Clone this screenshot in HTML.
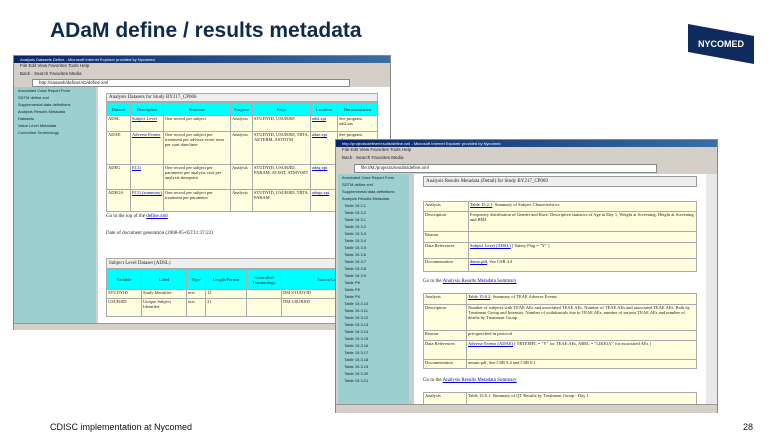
<!DOCTYPE html><html><head><style>
*{margin:0;padding:0;box-sizing:border-box}
body{width:780px;height:439px;background:#fff;position:relative;overflow:hidden;font-family:"Liberation Serif",serif;font-size:5px;color:#222}
.a{position:absolute}
.win{position:absolute;background:#d4d0c8;border:1px solid #888}
.tb{position:absolute;left:0;right:0;height:7px;background:linear-gradient(90deg,#0a246a,#3a6ea5);color:#fff;font-size:4px;font-family:"Liberation Sans",sans-serif;line-height:7px;padding-left:6px;white-space:nowrap;overflow:hidden}
.bar{position:absolute;left:0;right:0;font-size:4.5px;font-family:"Liberation Sans",sans-serif;padding-left:6px;white-space:nowrap;overflow:hidden;color:#222}
.side{position:absolute;background:#9ccfcf}
.cont{position:absolute;background:#fff;overflow:hidden}
table{border-collapse:collapse;position:absolute}
td{border:1px solid #aaa;background:#ffffe0;padding:0 1px;vertical-align:top;font-size:4.5px;line-height:5px;overflow:hidden}
th{border:1px solid #aaa;background:#00ffff;font-weight:normal;font-size:4.5px;padding:0 1px}
.l{color:#00c;text-decoration:underline}
.si{font-size:4px;color:#0a2030;line-height:7px;padding-left:4px;white-space:nowrap;font-family:"Liberation Sans",sans-serif}
</style></head><body>
<div class="a" style="left:50px;top:19px;font:bold 21px 'Liberation Sans',sans-serif;color:#0f2a4a">ADaM define / results metadata</div>
<svg class="a" style="left:686px;top:22px" width="70" height="44"><polygon points="2,2 68,14 68,42 2,30" fill="#0f2a5c"/><text x="35" y="25" fill="#fff" font-family="Liberation Sans" font-weight="bold" font-size="9" text-anchor="middle">NYCOMED</text></svg>

<div class="win" style="left:13px;top:55px;width:378px;height:275px">
<div class="tb" style="top:0">Analysis Datasets Define - Microsoft Internet Explorer provided by Nycomed</div>
<div class="bar" style="top:7px">File Edit View Favorites Tools Help</div>
<div class="bar" style="top:15px">Back · Search Favorites Media</div>
<div class="bar" style="top:23px;height:8px;background:#fff;left:18px;right:40px;border:1px solid #888">http://sasweb/define/AD/define.xml</div>
<div class="side" style="left:0;top:31px;width:82px;height:236px">
<div class="si">Annotated Case Report Form</div><div class="si">SDTM define.xml</div><div class="si">Supplemental data definitions</div><div class="si">Analysis Results Metadata</div><div class="si">Datasets</div><div class="si">Value Level Metadata</div><div class="si">Controlled Terminology</div></div>
<div class="cont" style="left:84px;top:31px;width:292px;height:236px">
<div class="a" style="left:8px;top:6px;width:272px;height:9px;background:#eee;border:1px solid #aaa;padding-left:2px;line-height:8px">Analysis Datasets for Study BY217_CP006</div>
<table style="left:8px;top:15px;width:272px">
<tr style="height:13px"><th style="width:24px">Dataset</th><th style="width:33px">Description</th><th style="width:67px">Structure</th><th style="width:22px">Purpose</th><th style="width:58px">Keys</th><th style="width:27px">Location</th><th>Documentation</th></tr>
<tr style="height:16px"><td>ADSL</td><td class="l">Subject Level</td><td>One record per subject</td><td>Analysis</td><td>STUDYID, USUBJID</td><td class="l">adsl.xpt</td><td>See program adsl.sas</td></tr>
<tr style="height:33px"><td>ADAE</td><td class="l">Adverse Events</td><td>One record per subject per treatment per adverse event term per start date/time</td><td>Analysis</td><td>STUDYID, USUBJID, TRTA, AETERM, ASTDTM</td><td class="l">adae.xpt</td><td>See program adae.sas</td></tr>
<tr style="height:25px"><td>ADEG</td><td class="l">ECG</td><td>One record per subject per parameter per analysis visit per analysis timepoint</td><td>Analysis</td><td>STUDYID, USUBJID, PARAM, AVISIT, ATMVISIT</td><td class="l">adeg.xpt</td><td></td></tr>
<tr style="height:22px"><td>ADEGS</td><td class="l">ECG (summary)</td><td>One record per subject per treatment per parameter</td><td>Analysis</td><td>STUDYID, USUBJID, TRTA, PARAM</td><td class="l">adegs.xpt</td><td></td></tr>
</table>
<div class="a" style="left:8px;top:127px">Go to the top of the <span class="l">define.xml</span></div>
<div class="a" style="left:8px;top:144px">Date of document generation (2008-05-05T11:37:22)</div>
<div class="a" style="left:8px;top:171px;width:300px;height:11px;background:#eee;border:1px solid #aaa;padding-left:2px;line-height:10px">Subject Level Dataset (ADSL)</div>
<table style="left:8px;top:182px;width:300px">
<tr style="height:20px"><th style="width:35px">Variable</th><th style="width:45px">Label</th><th style="width:19px">Type</th><th style="width:41px">Length/Format</th><th style="width:35px">Controlled Terminology</th><th>Source/Computation Method</th></tr>
<tr style="height:9px"><td>STUDYID</td><td>Study Identifier</td><td>text</td><td>12</td><td></td><td>DM.STUDYID</td></tr>
<tr style="height:18px"><td>USUBJID</td><td>Unique Subject Identifier</td><td>text</td><td>21</td><td></td><td>DM.USUBJID</td></tr>
</table>
</div>
<div class="a" style="left:0;right:0;top:267px;height:7px;background:#d4d0c8;border-top:1px solid #999"></div>
</div>

<div class="win" style="left:335px;top:139px;width:383px;height:274px">
<div class="tb" style="top:0">http://projects/define/results/define.xml - Microsoft Internet Explorer provided by Nycomed</div>
<div class="bar" style="top:7px">File Edit View Favorites Tools Help</div>
<div class="bar" style="top:15px">Back · Search Favorites Media</div>
<div class="bar" style="top:24px;height:9px;background:#fff;left:18px;right:60px;border:1px solid #888">file://M:/projects/results/define.xml</div>
<div class="side" style="left:2px;top:34px;width:71px;height:230px">
<div class="si">Annotated Case Report Form</div><div class="si">SDTM define.xml</div><div class="si">Supplemental data definitions</div><div class="si">Analysis Results Metadata</div>
<div class="si">&nbsp;&nbsp;Table 15.2.1</div><div class="si">&nbsp;&nbsp;Table 15.3.2</div><div class="si">&nbsp;&nbsp;Table 15.3.1</div><div class="si">&nbsp;&nbsp;Table 15.3.2</div><div class="si">&nbsp;&nbsp;Table 15.3.3</div><div class="si">&nbsp;&nbsp;Table 15.3.4</div><div class="si">&nbsp;&nbsp;Table 15.3.5</div><div class="si">&nbsp;&nbsp;Table 15.3.6</div><div class="si">&nbsp;&nbsp;Table 15.3.7</div><div class="si">&nbsp;&nbsp;Table 15.3.8</div><div class="si">&nbsp;&nbsp;Table 15.3.9</div><div class="si">&nbsp;&nbsp;Table PK</div><div class="si">&nbsp;&nbsp;Table PK</div><div class="si">&nbsp;&nbsp;Table PK</div><div class="si">&nbsp;&nbsp;Table 15.3.10</div><div class="si">&nbsp;&nbsp;Table 15.3.11</div><div class="si">&nbsp;&nbsp;Table 15.3.12</div><div class="si">&nbsp;&nbsp;Table 15.3.13</div><div class="si">&nbsp;&nbsp;Table 15.3.14</div><div class="si">&nbsp;&nbsp;Table 15.3.15</div><div class="si">&nbsp;&nbsp;Table 15.3.16</div><div class="si">&nbsp;&nbsp;Table 15.3.17</div><div class="si">&nbsp;&nbsp;Table 15.3.18</div><div class="si">&nbsp;&nbsp;Table 15.3.19</div><div class="si">&nbsp;&nbsp;Table 15.3.20</div><div class="si">&nbsp;&nbsp;Table 15.3.21</div></div>
<div class="a" style="left:73px;top:34px;width:5px;height:230px;background:#ccc"></div>
<div class="cont" style="left:78px;top:34px;width:292px;height:230px">
<div class="a" style="left:9px;top:2px;width:274px;height:11px;background:#eee;border:1px solid #999;padding-left:2px;line-height:10px">Analysis Results Metadata (Detail) for Study BY217_CP069</div>
<table style="left:9px;top:27px;width:274px">
<tr style="height:10px"><td style="width:45px">Analysis</td><td><span class="l">Table 15.2.1</span>: Summary of Subject Characteristics</td></tr>
<tr style="height:20px"><td>Description</td><td>Frequency distribution of Gender and Race. Descriptive statistics of Age at Day 1, Weight at Screening, Height at Screening and BMI</td></tr>
<tr style="height:11px"><td>Reason</td><td></td></tr>
<tr style="height:16px"><td>Data References</td><td><span class="l">Subject Level (ADSL)</span> [ Safety Flag = "Y" ]</td></tr>
<tr style="height:13px"><td>Documentation</td><td><span class="l">demo.pdf</span>, See CSR 4.4</td></tr>
</table>
<div class="a" style="left:9px;top:105px">Go to the <span class="l">Analysis Results Metadata Summary</span></div>
<table style="left:9px;top:119px;width:274px">
<tr style="height:11px"><td style="width:43px">Analysis</td><td><span class="l">Table 15.6.2</span>: Summary of TEAE Adverse Events</td></tr>
<tr style="height:26px"><td>Description</td><td>Number of subjects with TEAE AEs and associated TEAE AEs. Number of TEAE AEs and associated TEAE AEs. Both by Treatment Group and Intensity. Number of withdrawals due to TEAE AEs, number of serious TEAE AEs and number of deaths by Treatment Group</td></tr>
<tr style="height:10px"><td>Reason</td><td>pre-specified in protocol</td></tr>
<tr style="height:19px"><td>Data References</td><td><span class="l">Adverse Events (ADAE)</span> [ TRTEMFL = "Y" for TEAE AEs, AREL = "LIKELY" for associated AEs ]</td></tr>
<tr style="height:9px"><td>Documentation</td><td>aesum.pdf, See CSR 9.4 and CSR 9.1</td></tr>
</table>
<div class="a" style="left:9px;top:204px">Go to the <span class="l">Analysis Results Metadata Summary</span></div>
<table style="left:9px;top:218px;width:274px"><tr style="height:12px"><td style="width:43px">Analysis</td><td>Table 15.8.1: Summary of QT Results by Treatment Group - Day 1</td></tr></table>
</div>
<div class="a" style="left:370px;top:34px;width:11px;height:230px;background:#e8e8e8"></div>
<div class="a" style="left:0;right:0;top:264px;height:9px;background:#d4d0c8;border-top:1px solid #999"></div>
</div>

<div class="a" style="left:50px;top:422px;font:9px 'Liberation Sans',sans-serif;color:#111">CDISC implementation at Nycomed</div>
<div class="a" style="left:743px;top:422px;font:9px 'Liberation Sans',sans-serif;color:#111">28</div>
</body></html>
